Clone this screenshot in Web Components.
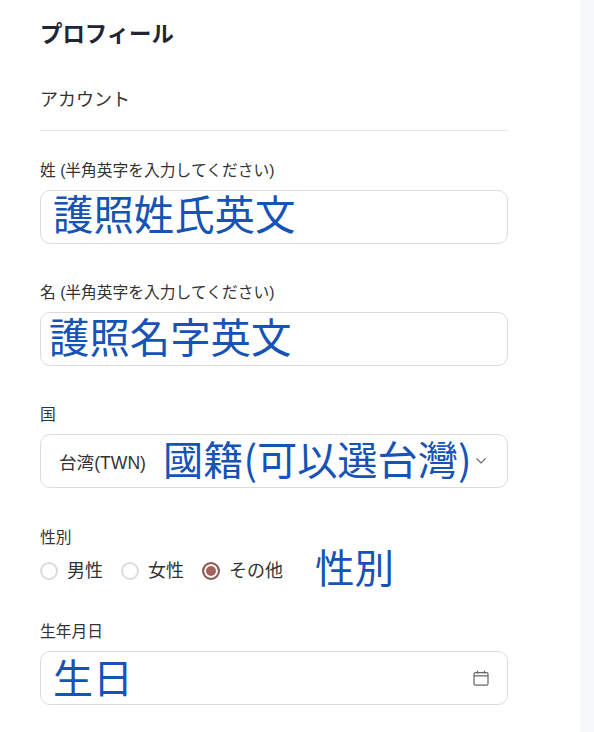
<!DOCTYPE html>
<html lang="ja">
<head>
<meta charset="utf-8">
<title>プロフィール</title>
<style>
  html, body { margin: 0; height: 100%; background: #fff; }
  body {
    font-family: "Liberation Sans", "Noto Sans CJK JP", sans-serif;
    color: #333;
    overflow: hidden;
  }
  .note { color: #1553b6; font-family: "Noto Sans CJK TC", sans-serif; line-height: 1; white-space: nowrap; }
</style>
</head>
<body>
<profile-page>
  <form-field label="姓 (半角英字を入力してください)" top="0">
    <text-box pad="13"><span class="note" style="font-size:40.4px;margin-bottom:8px">護照姓氏英文</span></text-box>
  </form-field>
  <form-field label="名 (半角英字を入力してください)" top="37">
    <text-box pad="9"><span class="note" style="font-size:40.4px;margin-bottom:5px">護照名字英文</span></text-box>
  </form-field>
  <form-field label="国" top="37">
    <select-box value="台湾(TWN)"><span class="note" style="font-size:40.2px;margin-bottom:5px">國籍(可以選台灣)</span></select-box>
  </form-field>
  <form-field label="性別" top="38" gap="3">
    <radio-row>
      <radio-item>男性</radio-item>
      <radio-item>女性</radio-item>
      <radio-item checked>その他</radio-item>
      <span class="note" slot="note" style="font-size:39.6px">性別</span>
    </radio-row>
  </form-field>
  <form-field label="生年月日" top="30">
    <text-box pad="13" calendar><span class="note" style="font-size:40px;margin-bottom:5px">生日</span></text-box>
  </form-field>
</profile-page>

<script>
class ProfilePage extends HTMLElement {
  constructor() {
    super();
    this.attachShadow({ mode: "open" });
    this.shadowRoot.innerHTML = `
      <style>
        :host { display: flex; height: 732px; }
        .main { width: 468px; padding: 0 72px 0 40px; }
        .side { flex: 1; background: #f6f8fa; }
        h1 { margin: 0; padding-top: 21px; font-size: 22.400px; line-height: 28px; font-weight: 700; color: #232333; }
        h2 { margin: 0; padding-top: 37px; font-size: 18px; line-height: 28px; font-weight: 400; color: #333; }
        .rule { height: 1px; margin-top: 16px; margin-bottom: 28px; background: #e6e6e6; }
      </style>
      <div class="main">
        <h1>プロフィール</h1>
        <h2>アカウント</h2>
        <div class="rule"></div>
        <slot></slot>
      </div>
      <div class="side"></div>
    `;
  }
}

class FormField extends HTMLElement {
  constructor() {
    super();
    this.attachShadow({ mode: "open" });
    this.shadowRoot.innerHTML = `
      <style>
        :host { display: block; }
        label { display: block; font-size: 15.750px; line-height: 23px; color: #333; margin-bottom: 8px; }
      </style>
      <label></label>
      <slot></slot>
    `;
  }
  connectedCallback() {
    this.shadowRoot.querySelector("label").textContent = this.getAttribute("label");
    this.style.marginTop = (this.getAttribute("top") || 0) + "px";
    if (this.hasAttribute("gap")) {
      this.shadowRoot.querySelector("label").style.marginBottom = this.getAttribute("gap") + "px";
    }
  }
}

class TextBox extends HTMLElement {
  constructor() {
    super();
    this.attachShadow({ mode: "open" });
    this.shadowRoot.innerHTML = `
      <style>
        :host { display: flex; box-sizing: border-box; height: 54px; align-items: center; justify-content: space-between;
          border: 1px solid #dcdcdc; border-radius: 10px; background: #fff; }
        svg { display: none; margin-right: 18px; }
        :host([calendar]) svg { display: block; }
      </style>
      <slot></slot>
      <svg width="16" height="16" viewBox="0 0 16 16" fill="none" stroke="#666" stroke-width="1.2">
        <rect x="1" y="2.600" width="14" height="12.600" rx="1.5"/>
        <path d="M1 5.800h14M4.500 .8v2.600M11.500 .8v2.600"/>
      </svg>
    `;
  }
  connectedCallback() {
    this.style.paddingLeft = (this.getAttribute("pad") - 1) + "px";
  }
}

class SelectBox extends HTMLElement {
  constructor() {
    super();
    this.attachShadow({ mode: "open" });
    this.shadowRoot.innerHTML = `
      <style>
        :host { display: flex; box-sizing: border-box; height: 54px; align-items: center;
          border: 1px solid #dcdcdc; border-radius: 10px; background: #fff; padding-left: 18px; }
        .value { width: 104px; font-size: 17.600px; color: #333; white-space: nowrap; }
        svg { margin-left: 4px; }
      </style>
      <span class="value"></span>
      <slot></slot>
      <svg width="12" height="12" viewBox="0 0 12 12" fill="none" stroke="#666" stroke-width="1.1"><path d="M1.500 3.500l4.500 4.500 4.500-4.500"/></svg>
    `;
  }
  connectedCallback() {
    this.shadowRoot.querySelector(".value").textContent = this.getAttribute("value");
  }
}

class RadioRow extends HTMLElement {
  constructor() {
    super();
    this.attachShadow({ mode: "open" });
    this.shadowRoot.innerHTML = `
      <style>
        :host { display: flex; align-items: center; gap: 18px; height: 38px; }
        ::slotted([slot=note]) { margin-left: 14px; margin-bottom: 10px; }
      </style>
      <slot></slot>
      <slot name="note"></slot>
    `;
  }
}

class RadioItem extends HTMLElement {
  constructor() {
    super();
    this.attachShadow({ mode: "open" });
    this.shadowRoot.innerHTML = `
      <style>
        :host { display: inline-flex; align-items: center; gap: 9px; font-size: 18px; line-height: 20px; color: #333; white-space: nowrap; }
        .dot { box-sizing: border-box; width: 18px; height: 18px; border: 2px solid #dcdcdc; border-radius: 50%; background: #fff; }
        :host([checked]) .dot { border-color: #8c5a55; background: #a5625c; box-shadow: inset 0 0 0 2px #fff; }
      </style>
      <span class="dot"></span>
      <slot></slot>
    `;
  }
}

customElements.define("profile-page", ProfilePage);
customElements.define("form-field", FormField);
customElements.define("text-box", TextBox);
customElements.define("select-box", SelectBox);
customElements.define("radio-row", RadioRow);
customElements.define("radio-item", RadioItem);
</script>
</body>
</html>
